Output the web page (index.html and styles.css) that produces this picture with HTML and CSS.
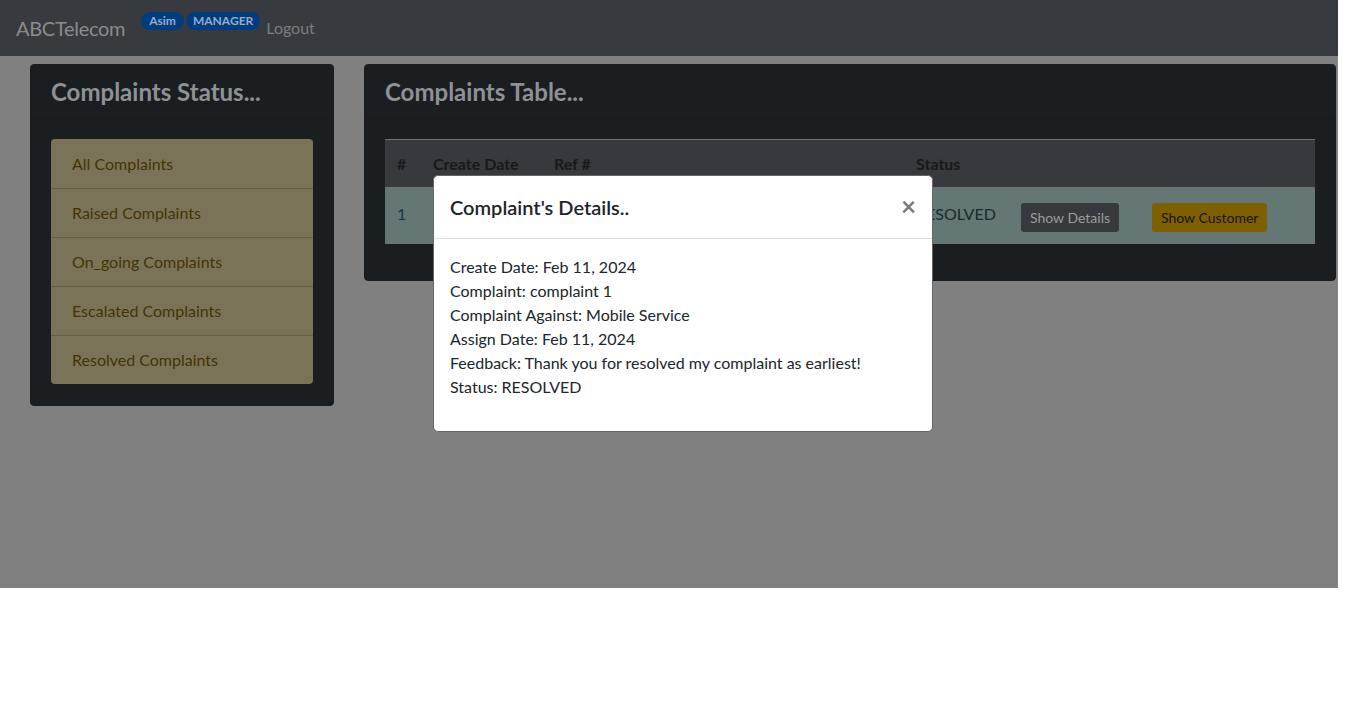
FILE: index.html
```html
<!DOCTYPE html>
<html lang="en">
<head>
<meta charset="utf-8">
<title>ABCTelecom</title>
<link rel="stylesheet" href="styles.css">
</head>
<body>
<div class="app">
  <nav class="navbar">
    <span class="brand">ABCTelecom</span>
    <span class="badges">
      <span class="badge">Asim</span>
      <span class="badge">MANAGER</span>
    </span>
    <span class="logout">Logout</span>
  </nav>
  <main class="content">
    <section class="card card-status">
      <div class="card-header"><h4 class="card-title">Complaints Status...</h4></div>
      <div class="card-body">
        <ul class="list-group">
          <li class="list-item">All Complaints</li>
          <li class="list-item">Raised Complaints</li>
          <li class="list-item">On_going Complaints</li>
          <li class="list-item">Escalated Complaints</li>
          <li class="list-item">Resolved Complaints</li>
        </ul>
      </div>
    </section>
    <section class="card card-table">
      <div class="card-header"><h4 class="card-title">Complaints Table...</h4></div>
      <div class="card-body">
        <table class="table">
          <thead>
            <tr>
              <th class="c-num">#</th>
              <th class="c-date">Create Date</th>
              <th class="c-ref">Ref #</th>
              <th class="c-status">Status</th>
              <th class="c-det"></th>
              <th class="c-cust"></th>
            </tr>
          </thead>
          <tbody>
            <tr>
              <td class="num">1</td>
              <td></td>
              <td></td>
              <td>RESOLVED</td>
              <td><span class="btn btn-secondary">Show Details</span></td>
              <td><span class="btn btn-warning">Show Customer</span></td>
            </tr>
          </tbody>
        </table>
      </div>
    </section>
  </main>
  <div class="modal">
    <div class="modal-header">
      <h5 class="modal-title">Complaint's Details..</h5>
      <span class="close">&times;</span>
    </div>
    <div class="modal-body">
      <p>Create Date: Feb 11, 2024<br>
      Complaint: complaint 1<br>
      Complaint Against: Mobile Service<br>
      Assign Date: Feb 11, 2024<br>
      Feedback: Thank you for resolved my complaint as earliest!<br>
      Status: RESOLVED</p>
    </div>
  </div>
</div>
</body>
</html>
```

FILE: styles.css
```css
* { box-sizing: border-box; }
html, body { margin: 0; padding: 0; background: #ffffff; }
body {
  font-family: Lato, "Noto Sans", "Liberation Sans", sans-serif;
  font-size: 16px;
  line-height: 24px;
  color: #212529;
}
.app {
  position: relative;
  width: 1338px;
  height: 588px;
  background: #808080;
}
.navbar {
  height: 56px;
  background: #373a3f;
  display: flex;
  align-items: center;
  padding: 0 16px;
}
.brand {
  font-size: 20px;
  color: #8a8c8f;
  margin-right: 16px;
  line-height: 30px;
  letter-spacing: -0.3px;
}
.badges {
  display: flex;
  gap: 2px;
  align-self: flex-start;
  margin-top: 12px;
}
.badge {
  background: #003d80;
  color: #9aabc0;
  font-size: 12px;
  font-weight: 700;
  line-height: 18px;
  padding: 0 8px;
  border-radius: 10px;
}
.badge + .badge { padding: 0 7px; }
.logout {
  color: #7c7e81;
  margin-left: 6px;
}
.content {
  display: flex;
  gap: 30px;
  padding: 8px 0 0 30px;
  align-items: flex-start;
}
.card {
  background: #1b1e21;
  border: 1px solid #191b1e;
  border-radius: 4px;
}
.card-status { width: 304px; }
.card-table { width: 972px; }
.card-header {
  padding: 12px 20px;
  border-bottom: 1px solid #181a1d;
}
.card-title {
  margin: 0;
  font-size: 24px;
  line-height: 29px;
  font-weight: 700;
  color: #8e9296;
}
.card-body { padding: 20px; }
.card-status .card-body { padding-bottom: 21px; }
.list-group {
  list-style: none;
  margin: 0;
  padding: 0;
  border-radius: 4px;
  overflow: hidden;
  background: #7b7358;
  border-top: 1px solid #7b7358;
}
.list-item {
  padding: 12px 21px;
  line-height: 24px;
  color: #433304;
  border-bottom: 1px solid #655d45;
}
.list-item:last-child { border-bottom: 0; height: 48px; }
.table {
  width: 930px;
  border-collapse: separate;
  border-spacing: 0;
  margin-bottom: 16px;
}
.table th, .table td {
  text-align: left;
  vertical-align: top;
}
.table thead th {
  background: #36393d;
  border-top: 1px solid #6d6f72;
  border-bottom: 2px solid #6f7275;
  color: #17191b;
  font-weight: 700;
  padding: 12px 12px 11px;
}
.table tbody td {
  background: #647774;
  color: #1a2a2c;
  padding: 13px 12px 12px;
}
.table tbody td.num { color: #0c3550; }
.c-num { width: 36px; }
.c-date { width: 121px; }
.c-ref { width: 362px; }
.c-status { width: 105px; }
.c-det { width: 131px; }
.btn {
  display: inline-block;
  vertical-align: top;
  font-size: 14px;
  line-height: 21px;
  padding: 4px 9px;
  border-radius: 3px;
  margin-top: 1px;
}
.btn-secondary { background: #36393d; color: #9c9c9c; }
.btn-warning { background: #7f6000; color: #141414; }
.modal {
  position: absolute;
  left: 433px;
  top: 175px;
  width: 500px;
  background: #ffffff;
  border: 1px solid #666;
  border-radius: 5px;
}
.modal-header {
  display: flex;
  align-items: center;
  justify-content: space-between;
  height: 63px;
  padding: 0 16px;
  border-bottom: 1px solid #dee2e6;
}
.modal-title {
  margin: 0;
  font-size: 20px;
  font-weight: 600;
  line-height: 30px;
  color: #212529;
}
.close {
  font-size: 26px;
  font-weight: 700;
  color: #7a7a7a;
  line-height: 24px;
  margin-top: -2px;
}
.modal-body { padding: 16px; }
.modal-body p { margin: 0 0 16px; }
```
